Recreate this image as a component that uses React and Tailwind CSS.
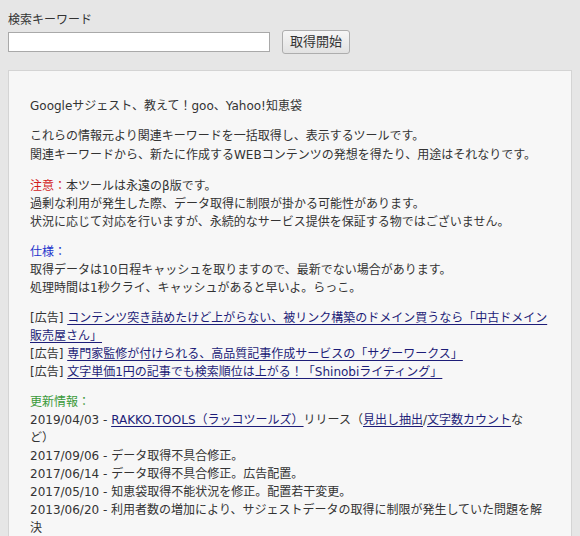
import React from 'react';

const ads = [
  ['コンテンツ突き詰めたけど上がらない、被リンク構築のドメイン買うなら「中古ドメイン', '販売屋さん」'],
  ['専門家監修が付けられる、高品質記事作成サービスの「サグーワークス」'],
  ['文字単価1円の記事でも検索順位は上がる！「Shinobiライティング」'],
];

const updates = [
  ['2017/09/06', 'データ取得不具合修正。'],
  ['2017/06/14', 'データ取得不具合修正。広告配置。'],
  ['2017/05/10', '知恵袋取得不能状況を修正。配置若干変更。'],
];

function A({ children }) {
  return <a href="#" className="text-[#1d1d78] underline underline-offset-[2px]">{children}</a>;
}

export default function App() {
  return (
    <div
      className="min-h-[536px] bg-[#e6e6e6] px-2 pt-[11px] text-[12px] leading-[18px] text-[#333]"
      style={{ fontFamily: '"DejaVu Sans", "Noto Sans CJK JP", sans-serif' }}
    >
      <div>検索キーワード</div>
      <div className="mt-[1px] flex items-center">
        <input type="text" className="h-[20px] w-[262px] border border-[#a9a9a9] bg-white outline-none" />
        <button className="ml-[12px] h-[24px] w-[68px] rounded-[3px] border border-[#adadad] bg-gradient-to-b from-[#f6f6f6] to-[#e2e2e2] text-[13px] text-[#333]">
          取得開始
        </button>
      </div>

      <div className="mt-[16px] border border-[#d4d4d4] bg-[#f7f7f7] pl-[21px] pr-[10px] pt-[26px] pb-6">
        <div className="flex flex-col gap-[12px] whitespace-nowrap">
          <p>Googleサジェスト、教えて！goo、Yahoo!知恵袋</p>
          <p className="leading-[19px]">
            これらの情報元より関連キーワードを一括取得し、表示するツールです。<br />
            関連キーワードから、新たに作成するWEBコンテンツの発想を得たり、用途はそれなりです。
          </p>
          <p>
            <span className="text-[#d21b1b]">注意：</span>本ツールは永遠のβ版です。<br />
            過剰な利用が発生した際、データ取得に制限が掛かる可能性があります。<br />
            状況に応じて対応を行いますが、永続的なサービス提供を保証する物ではございません。
          </p>
          <p>
            <span className="text-[#2233cc]">仕様：</span><br />
            取得データは10日程キャッシュを取りますので、最新でない場合があります。<br />
            処理時間は1秒クライ、キャッシュがあると早いよ。らっこ。
          </p>
          <div>
            {ads.map((ad, i) => (
              <div key={i}>
                [広告] <A>{ad[0]}</A>
                {ad[1] && (
                  <>
                    <br />
                    <A>{ad[1]}</A>
                  </>
                )}
              </div>
            ))}
          </div>
          <div>
            <div className="text-[#3a9a3a]">更新情報：</div>
            <div>
              2019/04/03 - <A>RAKKO.TOOLS（ラッコツールズ）</A>リリース（<A>見出し抽出</A>/<A>文字数カウント</A>な
              <br />
              ど）
            </div>
            {updates.map(([d, t]) => (
              <div key={d}>
                {d} - {t}
              </div>
            ))}
            <div>
              2013/06/20 - 利用者数の増加により、サジェストデータの取得に制限が発生していた問題を解
              <br />
              決
            </div>
          </div>
        </div>
      </div>
    </div>
  );
}
